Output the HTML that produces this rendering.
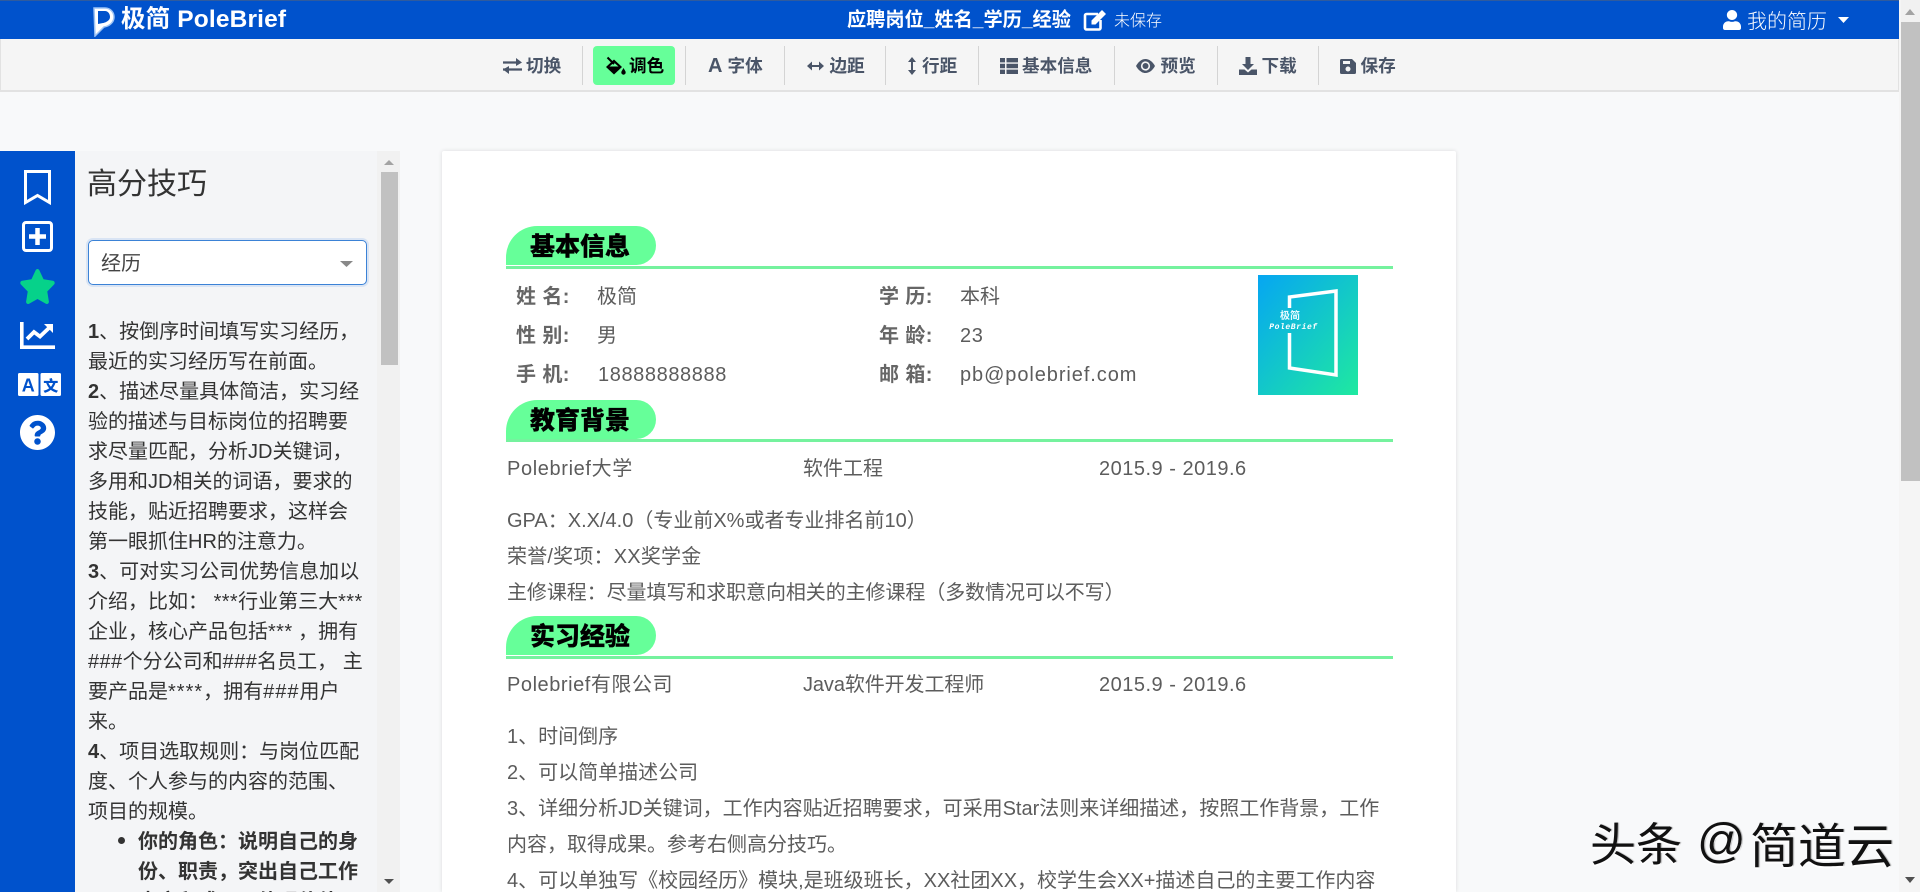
<!DOCTYPE html>
<html lang="zh-CN">
<head>
<meta charset="utf-8">
<title>极简 PoleBrief</title>
<style>
html,body{margin:0;padding:0;width:1920px;height:892px;overflow:hidden;background:#f8f9fa}
body{position:relative;font-family:"Liberation Sans","Noto Sans CJK SC",sans-serif;color:#555}
.a{position:absolute;white-space:nowrap}
svg{display:block;position:absolute}
.tb{font-size:17.6px;font-weight:700;color:#4a5568;top:52px;line-height:28px}
.sep{position:absolute;top:46px;width:1px;height:39px;background:#d4d4d4}
.pill{position:absolute;left:506px;width:150px;height:39px;background:#66ff99;border-radius:32px 20px 20px 0}
.pill span{position:absolute;left:24px;top:1px;line-height:40px;font-size:25px;font-weight:900;color:#000;white-space:nowrap;-webkit-text-stroke:.3px #000}
.line{position:absolute;left:506px;width:887px;height:3px;background:#75f29e}
.t{font-size:20px;line-height:36px;color:#5c5c5c}
.lb{font-size:20px;line-height:36px;color:#666;font-weight:700}
.s{letter-spacing:.4px}
.w{letter-spacing:1px}
</style>
</head>
<body>
<!-- navbar -->
<div class="a" style="left:0;top:0;width:1899px;height:39px;background:#0052cc;border-top:1px solid #2f5b9e;box-sizing:border-box"></div>
<svg style="left:92px;top:6px" width="24" height="31" viewBox="0 0 24 31"><path d="M2 2H13C19 2 22 7 22 11C22 16 18 20 12 21L3 30Z" fill="#fff" stroke="#9cc3f5" stroke-width="1.5"/><path d="M6 5H13C16 5 18 8 18 11C18 14 15 16 11 17L6 18Z" fill="#0052cc"/></svg>
<div class="a" style="left:121px;top:4px;font-size:24.5px;font-weight:700;color:#fff;line-height:32px;letter-spacing:.15px">极简 PoleBrief</div>
<div class="a" style="left:847px;top:6px;font-size:19.2px;font-weight:700;color:#fff;line-height:30px">应聘岗位_姓名_学历_经验</div>
<svg style="left:1083px;top:9px" width="24" height="22" viewBox="0 0 24 22"><path d="M15 5H3.500A1.500 1.500 0 0 0 2 6.500V19A1.500 1.500 0 0 0 3.500 20.500H16A1.500 1.500 0 0 0 17.500 19V11" fill="none" stroke="#fff" stroke-width="2.600"/><path d="M8.500 11.500L19 1L23 5L12.500 15.500H8.500Z" fill="#fff"/></svg>
<div class="a" style="left:1114px;top:10px;font-size:16px;color:#fff;line-height:24px;font-weight:300">未保存</div>
<svg style="left:1723px;top:10px" width="18" height="20" viewBox="0 0 448 512" preserveAspectRatio="none"><path fill="#fff" d="M224 256c70.700 0 128-57.300 128-128S294.700 0 224 0 96 57.300 96 128s57.300 128 128 128zm89.600 32h-16.700c-22.200 10.200-46.900 16-72.900 16s-50.600-5.800-72.900-16h-16.700C60.200 288 0 348.200 0 422.400V464c0 26.500 21.500 48 48 48h352c26.500 0 48-21.500 48-48v-41.600c0-74.200-60.200-134.400-134.400-134.400z"/></svg>
<div class="a" style="left:1747px;top:7px;font-size:20px;color:#fff;line-height:30px;font-weight:300">我的简历</div>
<svg style="left:1838px;top:17px" width="11" height="6" viewBox="0 0 11 6"><path d="M0 0H11L5.500 6Z" fill="#fff"/></svg>

<!-- toolbar -->
<div class="a" style="left:0;top:39px;width:1899px;height:53px;background:#f5f5f5;border:1px solid #e2e2e2;border-top:0;border-bottom:2px solid #e2e2e2;box-sizing:border-box"></div>

<svg style="left:503px;top:58px" width="19" height="16" viewBox="0 0 19 16"><path d="M0 4.500H15M0 11.500H19" stroke="#4a5568" stroke-width="2.200"/><path d="M13 0L19 4.500L13 8ZM6 8L0 11.500L6 16Z" fill="#4a5568"/></svg>
<div class="a tb" style="left:526px">切换</div>
<div class="sep" style="left:582px"></div>

<div class="a" style="left:593px;top:46px;width:82px;height:39px;background:#66ff99;border-radius:4px"></div>
<svg style="left:604px;top:56px" width="22" height="20" viewBox="0 0 22 20"><path d="M10 3.500L18 11L10 18.500L2 11Z" fill="#000"/><path d="M5.500 10.500L10 6.500L14.500 10.500Z" fill="#66ff99"/><path d="M3.500 1.500L10 8" stroke="#000" stroke-width="2"/><circle cx="19.500" cy="16.500" r="2.200" fill="#000"/><path d="M19.500 12L17.500 15.500H21.500Z" fill="#000"/></svg>
<div class="a tb" style="left:629px;color:#000">调色</div>
<div class="sep" style="left:685px"></div>

<div class="a tb" style="left:708px;font-size:20px">A</div>
<div class="a tb" style="left:727.500px">字体</div>
<div class="sep" style="left:784px"></div>

<svg style="left:807px;top:61px" width="17" height="10" viewBox="0 0 17 10"><path d="M3 5H14" stroke="#4a5568" stroke-width="2"/><path d="M0 5L5 0.500V9.500ZM17 5L12 0.500V9.500Z" fill="#4a5568"/></svg>
<div class="a tb" style="left:829.500px">边距</div>
<div class="sep" style="left:885px"></div>

<svg style="left:908px;top:57px" width="8" height="18" viewBox="0 0 8 18"><path d="M4 3V15" stroke="#4a5568" stroke-width="2"/><path d="M4 0L8 5H0ZM4 18L8 13H0Z" fill="#4a5568"/></svg>
<div class="a tb" style="left:922px">行距</div>
<div class="sep" style="left:978px"></div>

<svg style="left:1000px;top:58px" width="18" height="16" viewBox="0 0 18 16"><path d="M0 0H5V4.400H0ZM6.500 0H18V4.400H6.500ZM0 5.800H5V10.200H0ZM6.500 5.800H18V10.200H6.500ZM0 11.600H5V16H0ZM6.500 11.600H18V16H6.500Z" fill="#4a5568"/></svg>
<div class="a tb" style="left:1022px">基本信息</div>
<div class="sep" style="left:1114px"></div>

<svg style="left:1136px;top:59px" width="19" height="14" viewBox="0 0 19 14"><path d="M0 7C2.500 2.500 6 0 9.500 0S16.500 2.500 19 7C16.500 11.500 13 14 9.500 14S2.500 11.500 0 7Z" fill="#4a5568"/><circle cx="9.500" cy="7" r="4.600" fill="#f5f5f5"/><circle cx="9.500" cy="7" r="3" fill="#4a5568"/></svg>
<div class="a tb" style="left:1160.500px">预览</div>
<div class="sep" style="left:1217px"></div>

<svg style="left:1239px;top:57px" width="18" height="18" viewBox="0 0 18 18"><path d="M6.500 0H11.500V7H15L9 13L3 7H6.500Z" fill="#4a5568"/><path d="M0 12.500H5.500L9 15.500L12.500 12.500H18V18H0Z" fill="#4a5568"/></svg>
<div class="a tb" style="left:1261.500px">下载</div>
<div class="sep" style="left:1318px"></div>

<svg style="left:1340px;top:58.500px" width="16" height="15" viewBox="0 0 16 15"><path d="M1.500 0H12L16 4V13.500A1.500 1.500 0 0 1 14.500 15H1.500A1.500 1.500 0 0 1 0 13.500V1.500A1.500 1.500 0 0 1 1.500 0Z" fill="#4a5568"/><rect x="3" y="2" width="7" height="3" fill="#f5f5f5"/><circle cx="8" cy="10" r="2.500" fill="#f5f5f5"/></svg>
<div class="a tb" style="left:1360.500px">保存</div>

<!-- page scrollbar -->
<div class="a" style="left:1899px;top:0;width:21px;height:892px;background:#f5f5f5"></div>
<div class="a" style="left:1901px;top:0;width:19px;height:22px;background:#f1f1f1"></div>
<div class="a" style="left:1901px;top:22px;width:19px;height:459px;background:#c1c1c1"></div>
<svg style="left:1905px;top:9px" width="10" height="6" viewBox="0 0 10 6"><path d="M5 0L10 6H0Z" fill="#a3a3a3"/></svg>
<svg style="left:1905px;top:877px" width="10" height="6" viewBox="0 0 10 6"><path d="M0 0H10L5 6Z" fill="#505050"/></svg>

<!-- left rail -->
<div class="a" style="left:0;top:151px;width:75px;height:741px;background:#0052cc"></div>
<svg style="left:24px;top:170px" width="27" height="35" viewBox="0 0 27 35"><path d="M1.500 1.500H25.500V32.500L13.500 25.500L1.500 32.500Z" fill="none" stroke="#fff" stroke-width="3"/></svg>
<svg style="left:22px;top:221px" width="31" height="31" viewBox="0 0 31 31"><rect x="1.500" y="1.500" width="28" height="28" rx="2.500" fill="none" stroke="#fff" stroke-width="3"/><path d="M15.500 7V24M7 15.500H24" stroke="#fff" stroke-width="4.500"/></svg>
<svg style="left:19px;top:269px" width="37" height="35" viewBox="0 0 576 512" preserveAspectRatio="none"><path fill="#06d28a" d="M259.300 17.800L194 150.200 47.900 171.500c-26.200 3.800-36.700 36.100-17.700 54.600l105.700 103-25 145.500c-4.500 26.300 23.200 46 46.400 33.700L288 439.600l130.700 68.700c23.200 12.200 50.900-7.400 46.400-33.700l-25-145.500 105.700-103c19-18.500 8.500-50.800-17.700-54.600L382 150.200 316.700 17.800c-11.700-23.600-45.600-23.900-57.400 0z"/></svg>
<svg style="left:20px;top:322px" width="35" height="27" viewBox="0 0 35 27"><path d="M1.800 0V25.200H35" fill="none" stroke="#fff" stroke-width="3.600"/><path d="M7 17L14 10L20 14.500L30 5" fill="none" stroke="#fff" stroke-width="3.800"/><path d="M24 2H33V11Z" fill="#fff"/></svg>
<svg style="left:18px;top:373px" width="43" height="23" viewBox="0 0 43 23"><rect x="0" y="0" width="20.500" height="23" rx="1.500" fill="#fff"/><rect x="22.500" y="0" width="20.500" height="23" rx="1.500" fill="#fff"/><text x="10.200" y="18.500" font-family="Liberation Sans,sans-serif" font-size="18" font-weight="700" fill="#0052cc" text-anchor="middle">A</text><text x="32.700" y="18" font-family="Noto Sans CJK SC,sans-serif" font-size="15" font-weight="900" fill="#0052cc" text-anchor="middle">文</text></svg>
<svg style="left:20px;top:415px" width="35" height="35" viewBox="8 8 496 496"><path fill="#fff" d="M504 256c0 136.997-111.043 248-248 248S8 392.997 8 256C8 119.083 119.043 8 256 8s248 111.083 248 248zM262.655 90c-54.497 0-89.255 22.957-116.549 63.758-3.536 5.286-2.353 12.415 2.715 16.258l34.699 26.310c5.205 3.947 12.621 3.008 16.665-2.122 17.864-22.658 30.113-35.797 57.303-35.797 20.429 0 45.698 13.148 45.698 32.958 0 14.976-12.363 22.667-32.534 33.976C247.128 238.528 216 254.941 216 296v4c0 6.627 5.373 12 12 12h56c6.627 0 12-5.373 12-12v-1.333c0-28.462 83.186-29.647 83.186-106.667 0-58.002-60.165-102-116.531-102zM256 338c-25.365 0-46 20.635-46 46 0 25.364 20.635 46 46 46s46-20.636 46-46c0-25.365-20.635-46-46-46z"/></svg>

<!-- tips panel -->
<div class="a" style="left:75px;top:151px;width:325px;height:741px;background:#f4f5f7;overflow:hidden">
  <div class="a" style="left:12px;top:12px;font-size:30px;line-height:44px;color:#333;font-weight:400">高分技巧</div>
  <div class="a" style="left:13px;top:89px;width:279px;height:45px;box-sizing:border-box;background:#fff;border:1.500px solid #3b82d6;border-radius:5px;box-shadow:0 0 0 2px rgba(59,130,230,.14)"></div>
  <div class="a" style="left:26px;top:98px;font-size:20px;line-height:30px;color:#444">经历</div>
  <svg style="left:265px;top:110px" width="13" height="6" viewBox="0 0 13 6"><path d="M0 0H13L6.500 6Z" fill="#888"/></svg>
  <div class="a" style="left:13px;top:166px;font-size:20px;line-height:30px;color:#333"><b>1</b>、按倒序时间填写实习经历，<br>最近的实习经历写在前面。<br><b>2</b>、描述尽量具体简洁，实习经<br>验的描述与目标岗位的招聘要<br>求尽量匹配，分析JD关键词，<br>多用和JD相关的词语，要求的<br>技能，贴近招聘要求，这样会<br>第一眼抓住HR的注意力。<br><b>3</b>、可对实习公司优势信息加以<br>介绍，比如： <span class="s">***</span>行业第三大<span class="s">***</span><br>企业，核心产品包括<span class="s">***</span> ，拥有<br><span class="s">###</span>个分公司和<span class="s">###</span>名员工， 主<br>要产品是<span class="w">****</span>，拥有<span class="w">###</span>用户<br>来。<br><b>4</b>、项目选取规则：与岗位匹配<br>度、个人参与的内容的范围、<br>项目的规模。</div>
  <div class="a" style="left:43px;top:686px;width:7px;height:7px;border-radius:50%;background:#333"></div>
  <div class="a" style="left:63px;top:676px;font-size:20px;line-height:30px;color:#333;font-weight:700">你的角色：说明自己的身<br>份、职责，突出自己工作<br>内容和成果，体现价值</div>
  <div class="a" style="left:302px;top:0;width:23px;height:741px;background:#f1f1f1"></div>
  <div class="a" style="left:306px;top:21px;width:17px;height:193px;background:#c1c1c1"></div>
  <svg style="left:309px;top:9px" width="10" height="5" viewBox="0 0 10 5"><path d="M5 0L10 5H0Z" fill="#a3a3a3"/></svg>
  <svg style="left:309px;top:728px" width="10" height="5" viewBox="0 0 10 5"><path d="M0 0H10L5 5Z" fill="#505050"/></svg>
</div>

<!-- resume card -->
<div class="a" style="left:442px;top:151px;width:1014px;height:741px;background:#fff;box-shadow:0 0 4px rgba(0,0,0,.12);border-radius:2px 2px 0 0"></div>

<div class="pill" style="top:226px"><span>基本信息</span></div>
<div class="line" style="top:266px"></div>

<div class="a lb" style="left:516px;top:279px;letter-spacing:.4px">姓 名:</div>
<div class="a t" style="left:597px;top:279px">极简</div>
<div class="a lb" style="left:879px;top:279px;letter-spacing:.4px">学 历:</div>
<div class="a t" style="left:960px;top:279px">本科</div>
<div class="a lb" style="left:516px;top:318px;letter-spacing:.4px">性 别:</div>
<div class="a t" style="left:597px;top:318px">男</div>
<div class="a lb" style="left:879px;top:318px;letter-spacing:.4px">年 龄:</div>
<div class="a t" style="left:960px;top:318px;letter-spacing:.6px">23</div>
<div class="a lb" style="left:516px;top:357px;letter-spacing:.4px">手 机:</div>
<div class="a t" style="left:598px;top:357px;letter-spacing:.6px">18888888888</div>
<div class="a lb" style="left:879px;top:357px;letter-spacing:.4px">邮 箱:</div>
<div class="a t" style="left:960px;top:357px;letter-spacing:.92px">pb@polebrief.com</div>

<svg style="left:1258px;top:275px" width="100" height="120" viewBox="0 0 100 120">
  <defs><linearGradient id="g" x1="0" y1="0" x2="1" y2="1"><stop offset="0" stop-color="#06a6f2"/><stop offset="1" stop-color="#1fe9a0"/></linearGradient></defs>
  <rect width="100" height="120" fill="url(#g)"/>
  <path d="M31.500 33V22L78 16V100L31.500 93V58" fill="none" stroke="#fff" stroke-width="3.500"/>
  <text x="32" y="44" font-family="Noto Sans CJK SC,sans-serif" font-size="10" font-weight="700" fill="#e8fbff" text-anchor="middle">极简</text>
  <text x="35.500" y="54" font-family="Liberation Mono,monospace" font-size="8" font-weight="700" font-style="italic" fill="#fff" text-anchor="middle" letter-spacing=".6">PoleBrief</text>
</svg>

<div class="pill" style="top:400px"><span>教育背景</span></div>
<div class="line" style="top:439px"></div>

<div class="a t" style="left:507px;top:451px;letter-spacing:.63px">Polebrief大学</div>
<div class="a t" style="left:803px;top:451px">软件工程</div>
<div class="a t" style="left:1099px;top:451px;letter-spacing:.5px">2015.9 - 2019.6</div>

<div class="a t" style="left:507px;top:503px">GPA：X.X/4.0（专业前X%或者专业排名前10）</div>
<div class="a t" style="left:507px;top:539px;letter-spacing:.2px">荣誉/奖项：XX奖学金</div>
<div class="a t" style="left:507px;top:575px;letter-spacing:-.08px">主修课程：尽量填写和求职意向相关的主修课程（多数情况可以不写）</div>

<div class="pill" style="top:616px"><span>实习经验</span></div>
<div class="line" style="top:656px"></div>

<div class="a t" style="left:507px;top:667px;letter-spacing:.55px">Polebrief有限公司</div>
<div class="a t" style="left:803px;top:667px;letter-spacing:-.1px">Java软件开发工程师</div>
<div class="a t" style="left:1099px;top:667px;letter-spacing:.5px">2015.9 - 2019.6</div>

<div class="a t" style="left:507px;top:719px">1、时间倒序</div>
<div class="a t" style="left:507px;top:755px">2、可以简单描述公司</div>
<div class="a t" style="left:507px;top:791px">3、详细分析JD关键词，工作内容贴近招聘要求，可采用Star法则来详细描述，按照工作背景，工作</div>
<div class="a t" style="left:507px;top:827px">内容，取得成果。参考右侧高分技巧。</div>
<div class="a t" style="left:507px;top:863px">4、可以单独写《校园经历》模块,是班级班长，XX社团XX，校学生会XX+描述自己的主要工作内容</div>

<!-- watermark -->
<div class="a" style="left:1590px;top:808px;font-size:46px;line-height:68px;color:#111;font-family:'Noto Sans CJK SC',sans-serif;text-shadow:0 2px 0 rgba(255,255,255,.9),1px 0 1px rgba(0,0,0,.35)">头条</div>
<div class="a" style="left:1697px;top:808px;font-size:48px;line-height:68px;color:#111;font-family:'Liberation Sans',sans-serif;text-shadow:0 2px 0 rgba(255,255,255,.9),1px 0 1px rgba(0,0,0,.35)">@</div>
<div class="a" style="left:1750px;top:808px;font-size:48px;line-height:68px;color:#111;font-family:'Noto Sans CJK SC',sans-serif;text-shadow:0 2px 0 rgba(255,255,255,.9),1px 0 1px rgba(0,0,0,.35)">简道云</div>
</body>
</html>
